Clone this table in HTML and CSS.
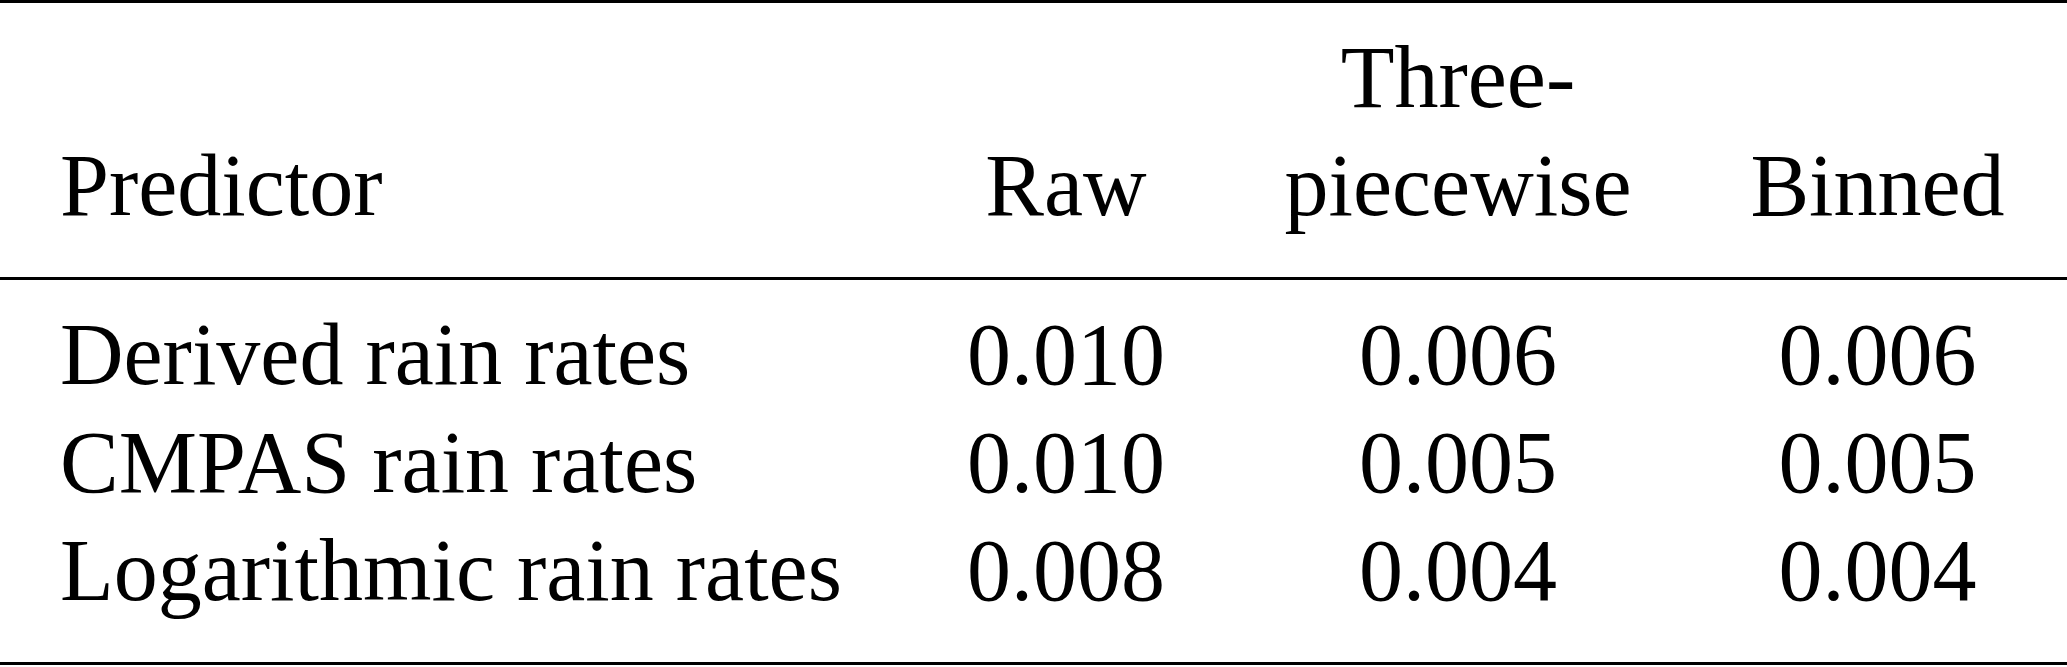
FILE: index.html
```html
<!DOCTYPE html>
<html lang="en">
<head>
    <meta charset="UTF-8">
    <title>Predictor table</title>
    <link rel="stylesheet" href="styles.css">
</head>
<body>
    <table class="results">
        <colgroup>
            <col class="col-name">
            <col class="col-raw">
            <col class="col-three">
            <col class="col-binned">
        </colgroup>
        <thead>
            <tr>
                <th class="name">Predictor</th>
                <th>Raw</th>
                <th>Three-<br>piecewise</th>
                <th>Binned</th>
            </tr>
        </thead>
        <tbody>
            <tr>
                <td class="name">Derived rain rates</td>
                <td>0.010</td>
                <td>0.006</td>
                <td>0.006</td>
            </tr>
            <tr>
                <td class="name">CMPAS rain rates</td>
                <td>0.010</td>
                <td>0.005</td>
                <td>0.005</td>
            </tr>
            <tr>
                <td class="name">Logarithmic rain rates</td>
                <td>0.008</td>
                <td>0.004</td>
                <td>0.004</td>
            </tr>
        </tbody>
    </table>
</body>
</html>
```

FILE: styles.css
```css
*{
    margin: 0;
    padding: 0;
}
body{
    background: #fff;
    color: #000;
    font-family: "Liberation Serif", "Times New Roman", serif;
}
.results{
    width: 100%;
    table-layout: fixed;
    border-collapse: collapse;
    border-top: 3px solid #000;
    border-bottom: 3px solid #000;
    font-size: 88px;
    line-height: 108px;
}
.col-name{
    width: 904px;
}
.col-raw{
    width: 324px;
}
.col-three{
    width: 460px;
}
.col-binned{
    width: 379px;
}
.results th,
.results td{
    font-weight: normal;
    text-align: center;
    vertical-align: bottom;
    white-space: nowrap;
}
.results .name{
    text-align: left;
    padding-left: 60px;
}
.results thead tr{
    border-bottom: 3px solid #000;
}
.results thead th{
    padding-top: 21px;
    padding-bottom: 37px;
}
.results tbody tr:first-child td{
    padding-top: 21px;
}
.results tbody tr:last-child td{
    padding-bottom: 37px;
}
```
